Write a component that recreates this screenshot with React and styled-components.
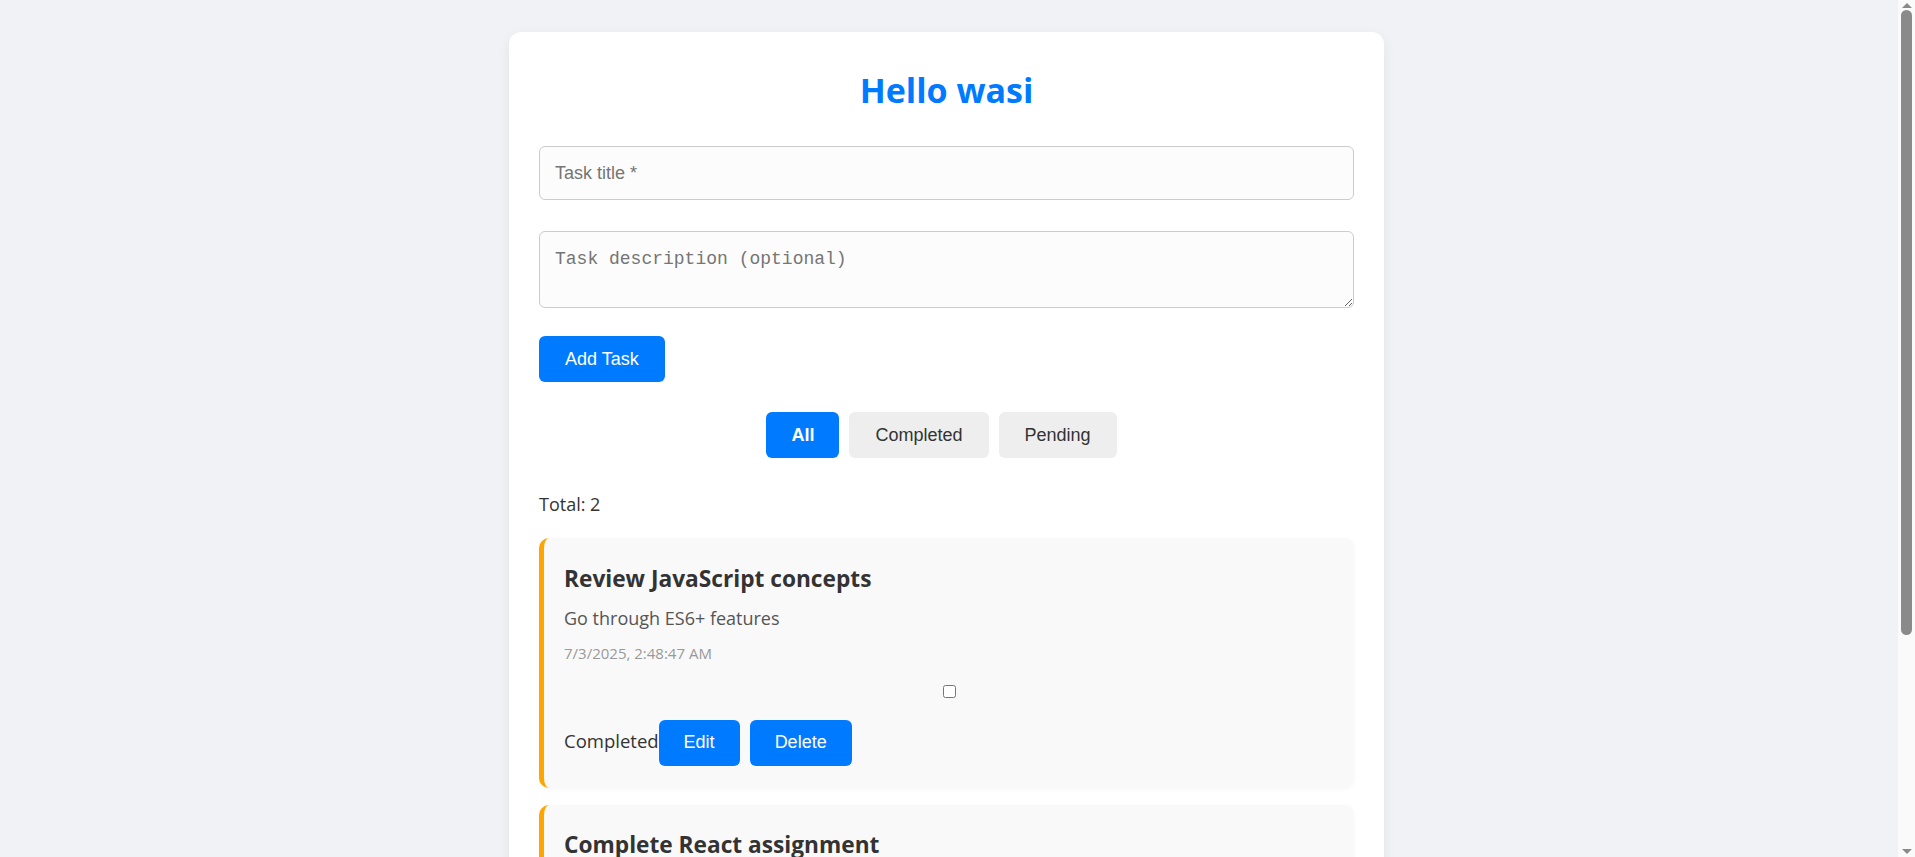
import styled, { createGlobalStyle } from 'styled-components';

const tasks = [
  {
    id: 1,
    title: 'Review JavaScript concepts',
    description: 'Go through ES6+ features',
    createdAt: '7/3/2025, 2:48:47 AM',
    completed: false,
  },
  {
    id: 2,
    title: 'Complete React assignment',
    description: 'Build the task manager with filters',
    createdAt: '7/3/2025, 2:47:12 AM',
    completed: false,
  },
];

const filters = ['All', 'Completed', 'Pending'];

const App = () => {
  return (
    <>
      <GlobalStyle />
      <Container>
        <Heading>Hello wasi</Heading>
        <TitleInput type="text" placeholder="Task title *" />
        <DescInput placeholder="Task description (optional)" />
        <AddButton>Add Task</AddButton>
        <Filters>
          {filters.map((f) => (
            <FilterButton key={f} $active={f === 'All'}>{f}</FilterButton>
          ))}
        </Filters>
        <Total>Total: {tasks.length}</Total>
        {tasks.map((task) => (
          <TaskCard key={task.id} $done={task.completed}>
            <TaskTitle>{task.title}</TaskTitle>
            <TaskDesc>{task.description}</TaskDesc>
            <TaskDate>{task.createdAt}</TaskDate>
            <CheckRow>
              <Check type="checkbox" defaultChecked={task.completed} />
            </CheckRow>
            <Footer>
              <span>Completed</span>
              <ActionButton>Edit</ActionButton>
              <ActionButton>Delete</ActionButton>
            </Footer>
          </TaskCard>
        ))}
      </Container>
      {/* window scrollbar, as the page shows it */}
      <ScrollTrack>
        <Arrow />
        <Thumb />
        <Arrow $down />
      </ScrollTrack>
    </>
  );
};

const GlobalStyle = createGlobalStyle`
  body {
    margin: 0;
    padding-right: 22px;
    background: #f0f2f5;
    font-family: "Open Sans", "Noto Sans", sans-serif;
    color: #333;
  }
`;

const Container = styled.div`
  width: 875px;
  box-sizing: border-box;
  margin: 32px auto;
  padding: 35px 30px 30px;
  background: #fff;
  border-radius: 12px;
  box-shadow: 0 4px 14px rgba(0, 0, 0, 0.06);
`;

const Heading = styled.h1`
  margin: 0 0 33px;
  text-align: center;
  color: #007bff;
  font-size: 34px;
  font-weight: 700;
`;

const TitleInput = styled.input`
  display: block;
  width: 100%;
  height: 54px;
  box-sizing: border-box;
  margin: 0 0 31px;
  padding: 0 15px;
  border: 1px solid #ccc;
  border-radius: 6px;
  background: #fcfcfc;
  font-family: "Liberation Sans", Arial, sans-serif;
  font-size: 18px;
`;

const DescInput = styled.textarea`
  display: block;
  width: 100%;
  height: 77px;
  box-sizing: border-box;
  margin: 0 0 28px;
  padding: 17px 15px 15px;
  border: 1px solid #ccc;
  border-radius: 6px;
  background: #fcfcfc;
  font-family: "Liberation Mono", monospace;
  font-size: 18px;
`;

const BlueButton = styled.button`
  height: 46px;
  padding: 0 25px;
  border: none;
  border-radius: 6px;
  background: #007bff;
  color: #fff;
  font-family: "Liberation Sans", Arial, sans-serif;
  font-size: 18px;
  cursor: pointer;
`;

const AddButton = styled(BlueButton)`
  display: block;
  padding: 0 26px;
  margin-bottom: 30px;
`;

const Filters = styled.div`
  display: flex;
  justify-content: center;
`;

const FilterButton = styled.button`
  height: 46px;
  margin-right: 10px;
  padding: 0 ${(p) => (p.$active ? 25 : 26)}px;
  border: none;
  border-radius: 6px;
  background: ${(p) => (p.$active ? '#007bff' : '#eee')};
  color: ${(p) => (p.$active ? '#fff' : '#333')};
  font-family: "Liberation Sans", Arial, sans-serif;
  font-size: 18px;
  font-weight: ${(p) => (p.$active ? 700 : 400)};
  cursor: pointer;
`;

const Total = styled.p`
  margin: 34px 0 22px;
  font-size: 18px;
`;

const TaskCard = styled.div`
  margin-bottom: 17px;
  padding: 20px 20px 22px;
  border-left: 5px solid ${(p) => (p.$done ? '#28a745' : '#ffa500')};
  border-radius: 10px;
  background: #f9f9f9;
  box-shadow: 0 1px 4px rgba(0, 0, 0, 0.04);
`;

const TaskTitle = styled.h3`
  margin: 4.5px 0 12px;
  font-size: 22.7px;
  font-weight: 700;
  color: #333;
`;

const TaskDesc = styled.p`
  margin: 0 0 13px;
  font-size: 18px;
  color: #555;
`;

const TaskDate = styled.p`
  margin: 0;
  font-size: 15px;
  color: #999;
`;

const CheckRow = styled.div`
  display: flex;
  justify-content: center;
  padding: 22px 0 22px;
`;

const Check = styled.input`
  width: 13px;
  height: 13px;
  margin: 0;
`;

const Footer = styled.div`
  display: flex;
  align-items: baseline;
  font-size: 18.5px;
`;

const ActionButton = styled(BlueButton)`
  margin-right: 10px;
`;

const ScrollTrack = styled.div`
  position: fixed;
  top: 0;
  right: 0;
  bottom: 0;
  width: 17px;
  display: flex;
  flex-direction: column;
  align-items: center;
  background: #fafafa;
`;

const Arrow = styled.div`
  flex: none;
  width: 0;
  height: 0;
  margin: ${(p) => (p.$down ? 'auto 0 3px' : '3px 0 0')};
  border-left: 5px solid transparent;
  border-right: 5px solid transparent;
  ${(p) => (p.$down ? 'border-top: 5px solid #8a8a8a;' : 'border-bottom: 5px solid #8a8a8a;')}
`;

const Thumb = styled.div`
  flex: none;
  width: 11px;
  height: 625px;
  margin-top: 2px;
  border-radius: 6px;
  background: #8a8a8a;
`;

export default App;
